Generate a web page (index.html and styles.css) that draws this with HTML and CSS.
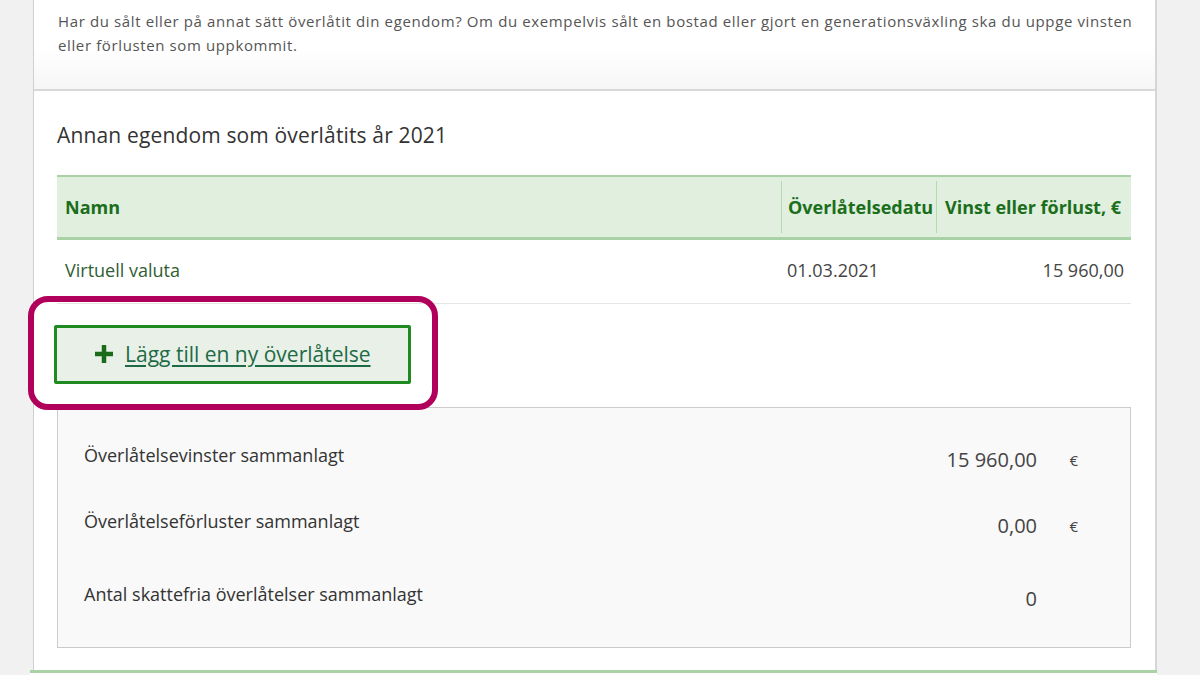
FILE: index.html
```html
<!DOCTYPE html>
<html lang="sv">
<head>
<meta charset="utf-8">
<title>Annan egendom som överlåtits</title>
<link rel="stylesheet" href="styles.css">
</head>
<body>
<div class="page">
  <div class="card">
    <div class="intro">
      <p>Har du sålt eller på annat sätt överlåtit din egendom? Om du exempelvis sålt en bostad eller gjort en generationsväxling ska du uppge vinsten eller förlusten som uppkommit.</p>
    </div>
    <div class="section">
      <h2 class="heading">Annan egendom som överlåtits år 2021</h2>
      <div class="table">
        <div class="thead">
          <div class="th"><span>Namn</span></div>
          <div class="th sep"><span>Överlåtelsedatu</span></div>
          <div class="th sep"><span>Vinst eller förlust, €</span></div>
        </div>
        <div class="trow">
          <div class="td name">Virtuell valuta</div>
          <div class="td date">01.03.2021</div>
          <div class="td num">15 960,00</div>
        </div>
      </div>
      <div class="btn-wrap">
        <button class="add-btn" type="button">
          <svg class="plus" width="18" height="18" viewBox="0 0 18 18" aria-hidden="true"><path d="M9 0v18M0 9h18" stroke="#1a6b1a" stroke-width="4.5" fill="none"/></svg>
          <span class="add-label">Lägg till en ny överlåtelse</span>
        </button>
        <div class="highlight"></div>
      </div>
      <div class="summary">
        <div class="srow r1">
          <div class="slabel">Överlåtelsevinster sammanlagt</div>
          <div class="svalue">15 960,00</div>
          <div class="sunit">€</div>
        </div>
        <div class="srow r2">
          <div class="slabel">Överlåtelseförluster sammanlagt</div>
          <div class="svalue">0,00</div>
          <div class="sunit">€</div>
        </div>
        <div class="srow r3">
          <div class="slabel">Antal skattefria överlåtelser sammanlagt</div>
          <div class="svalue">0</div>
          <div class="sunit"></div>
        </div>
      </div>
    </div>
    <div class="next"></div>
  </div>
</div>
</body>
</html>
```
FILE: styles.css
```css
* { box-sizing: border-box; }
html, body { margin: 0; padding: 0; }
body {
  background: #f1f1f1;
  font-family: "Open Sans", "Noto Sans", "Liberation Sans", sans-serif;
  color: #333;
  width: 1200px;
  height: 675px;
  overflow: hidden;
}
.page {
  padding-left: 33px;
}
.card {
  width: 1124px;
  background: #fff;
  border-left: 1px solid #cfcfcf;
  border-right: 2px solid #d6d6d6;
}
.intro {
  height: 91px;
  padding: 9px 20px 0 24px;
  background: linear-gradient(#ffffff 55%, #f6f6f6);
  border-bottom: 2px solid #d8d8d8;
}
.intro p {
  margin: 0;
  font-size: 15px;
  letter-spacing: 0.62px;
  line-height: 24px;
  color: #555;
}
.section {
  padding: 30px 24px 22px 23px;
}
.heading {
  margin: 0;
  font-size: 21px;
  letter-spacing: 0.15px;
  line-height: 28px;
  font-weight: 400;
  color: #333;
}
.table {
  margin-top: 26px;
}
.thead {
  display: grid;
  grid-template-columns: 1fr 155px 195px;
  height: 65px;
  background: #e1efdf;
  border-top: 2px solid #a9d3a6;
  border-bottom: 3px solid #a9d3a6;
}
.th {
  display: flex;
  align-items: center;
  margin: 4px 0;
  padding-left: 8px;
  font-size: 18px;
  font-weight: 700;
  color: #1b6e1b;
  white-space: nowrap;
  overflow: hidden;
}
.th.sep {
  border-left: 1px solid #b6d8b3;
  padding-left: 6px;
}
.th.sep:last-child { padding-left: 8px; }
.trow {
  display: grid;
  grid-template-columns: 1fr 155px 195px;
  height: 64px;
  padding-bottom: 4px;
  align-items: center;
  border-bottom: 1px solid #e6e6e6;
  font-size: 18px;
}
.td { padding-left: 8px; }
.td.name { color: #2f5e33; }
.td.date { padding-left: 6px; color: #444; }
.td.num { text-align: right; padding-right: 7px; color: #444; }
.btn-wrap {
  position: relative;
  padding-top: 21px;
  margin-left: -3px;
}
.add-btn {
  display: flex;
  align-items: center;
  gap: 12px;
  width: 357px;
  height: 59px;
  padding: 0 0 2px 38px;
  background: #e9f0e8;
  border: 3px solid #1f8a1f;
  border-radius: 2px;
  font-family: inherit;
  cursor: pointer;
}
.plus { flex: none; }
.add-label {
  font-size: 21px;
  color: #1d6b45;
  text-decoration: underline;
  text-underline-offset: 3px;
  white-space: nowrap;
}
.highlight {
  position: absolute;
  left: -26px;
  top: -8px;
  width: 410px;
  height: 114px;
  border: 6px solid #b0005c;
  border-radius: 20px;
  pointer-events: none;
}
.summary {
  margin-top: 23px;
  height: 241px;
  background: #f9f9f9;
  border: 1px solid #cbcbcb;
  padding: 0 52px 0 26px;
}
.srow {
  display: grid;
  grid-template-columns: 1fr auto 41px;
  font-size: 18px;
  line-height: 28px;
  color: #333;
}
.srow.r1 { margin-top: 33px; }
.srow.r2 { margin-top: 33px; }
.srow.r3 { margin-top: 40px; }
.svalue { padding-top: 5px; color: #444; text-align: right; font-size: 20px; }
.sunit { padding-top: 5px; text-align: right; font-size: 15px; color: #444; }
.next {
  height: 8px;
  margin-left: -4px;
  width: 1127px;
  border-top: 3px solid #a9d3a6;
  background: #fff;
}
```
